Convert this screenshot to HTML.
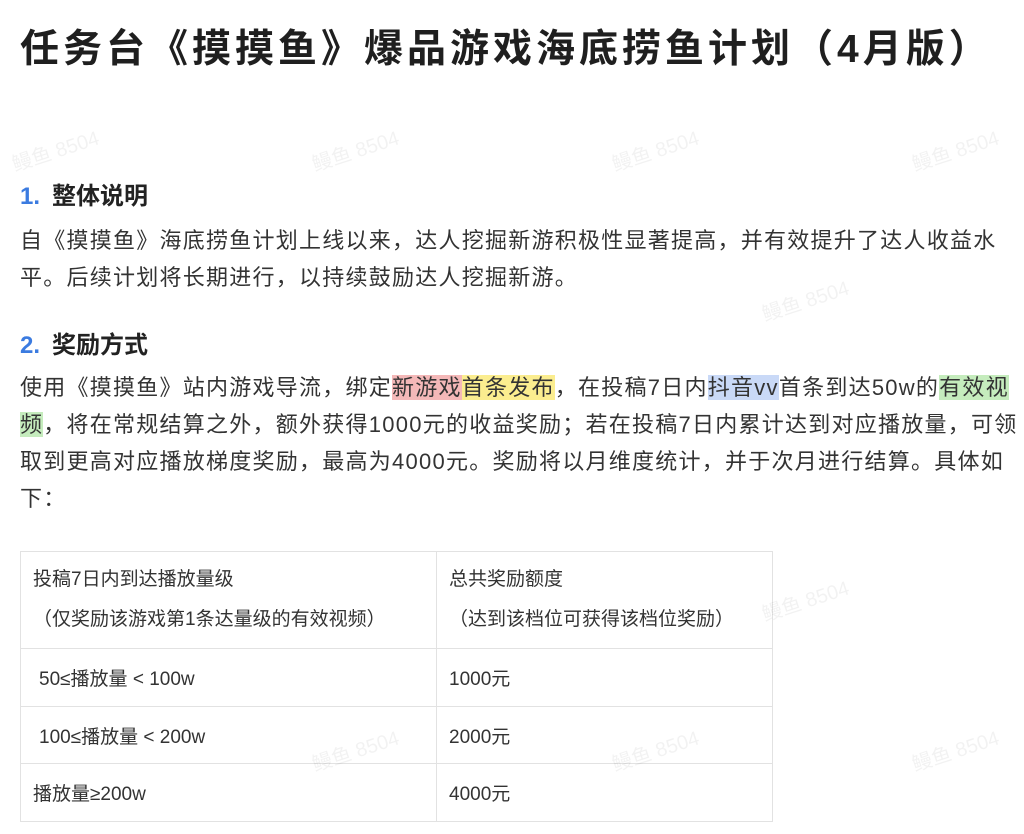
<!DOCTYPE html>
<html><head><meta charset="utf-8"><style>
body{margin:0;background:#fff;width:1024px;height:834px;overflow:hidden;font-family:"Liberation Sans","Noto Sans CJK SC",sans-serif;color:#222;position:relative}
.t{position:absolute;left:20px;top:18px;font-size:39px;font-weight:bold;letter-spacing:4px;white-space:nowrap;color:#1f1f1f}
.h{position:absolute;left:20px;font-size:24px;font-weight:bold;white-space:nowrap}
.h b{color:#3b7be0;margin-right:12px}
.p{position:absolute;left:20px;width:1004px;font-size:22px;letter-spacing:1.25px;line-height:37px;color:#333}
.r{background:#f4b8b8}.y{background:#fbed8f}.bl{background:#c9d9f7}.g{background:#c5ecbd}
table{position:absolute;left:20px;top:551px;border-collapse:collapse;font-size:19px;color:#333}
td{border:1.5px solid #e2e2e2;padding:0 0 0 12px;vertical-align:middle}
.wm{position:absolute;color:rgba(0,0,0,0.05);font-size:20px;transform:rotate(-18deg);white-space:nowrap}
</style></head><body>
<div class="t">任务台《摸摸鱼》爆品游戏海底捞鱼计划（4月版）</div>
<div class="h" style="top:176px"><b>1.</b>整体说明</div>
<div class="p" style="top:222px">自《摸摸鱼》海底捞鱼计划上线以来，达人挖掘新游积极性显著提高，并有效提升了达人收益水平。后续计划将长期进行，以持续鼓励达人挖掘新游。</div>
<div class="h" style="top:325px"><b>2.</b>奖励方式</div>
<div class="p" style="top:369px">使用《摸摸鱼》站内游戏导流，绑定<span class="r">新游戏</span><span class="y">首条发布</span>，在投稿7日内<span class="bl">抖音vv</span>首条到达50w的<span class="g">有效视频</span>，将在常规结算之外，额外获得1000元的收益奖励；若在投稿7日内累计达到对应播放量，可领取到更高对应播放梯度奖励，最高为4000元。奖励将以月维度统计，并于次月进行结算。具体如下：</div>
<table>
<tr style="height:97px"><td style="width:403px;line-height:40px">投稿7日内到达播放量级<br>（仅奖励该游戏第1条达量级的有效视频）</td><td style="width:323px;line-height:40px">总共奖励额度<br>（达到该档位可获得该档位奖励）</td></tr>
<tr style="height:58px"><td style="padding-left:18px">50≤播放量 &lt; 100w</td><td>1000元</td></tr>
<tr style="height:57px"><td style="padding-left:18px">100≤播放量 &lt; 200w</td><td>2000元</td></tr>
<tr style="height:58px"><td>播放量≥200w</td><td>4000元</td></tr>
</table>
<div class="wm" style="left:10px;top:135px">鳗鱼 8504</div>
<div class="wm" style="left:310px;top:135px">鳗鱼 8504</div>
<div class="wm" style="left:610px;top:135px">鳗鱼 8504</div>
<div class="wm" style="left:910px;top:135px">鳗鱼 8504</div>
<div class="wm" style="left:760px;top:285px">鳗鱼 8504</div>
<div class="wm" style="left:760px;top:585px">鳗鱼 8504</div>
<div class="wm" style="left:310px;top:735px">鳗鱼 8504</div>
<div class="wm" style="left:610px;top:735px">鳗鱼 8504</div>
<div class="wm" style="left:910px;top:735px">鳗鱼 8504</div>
</body></html>
